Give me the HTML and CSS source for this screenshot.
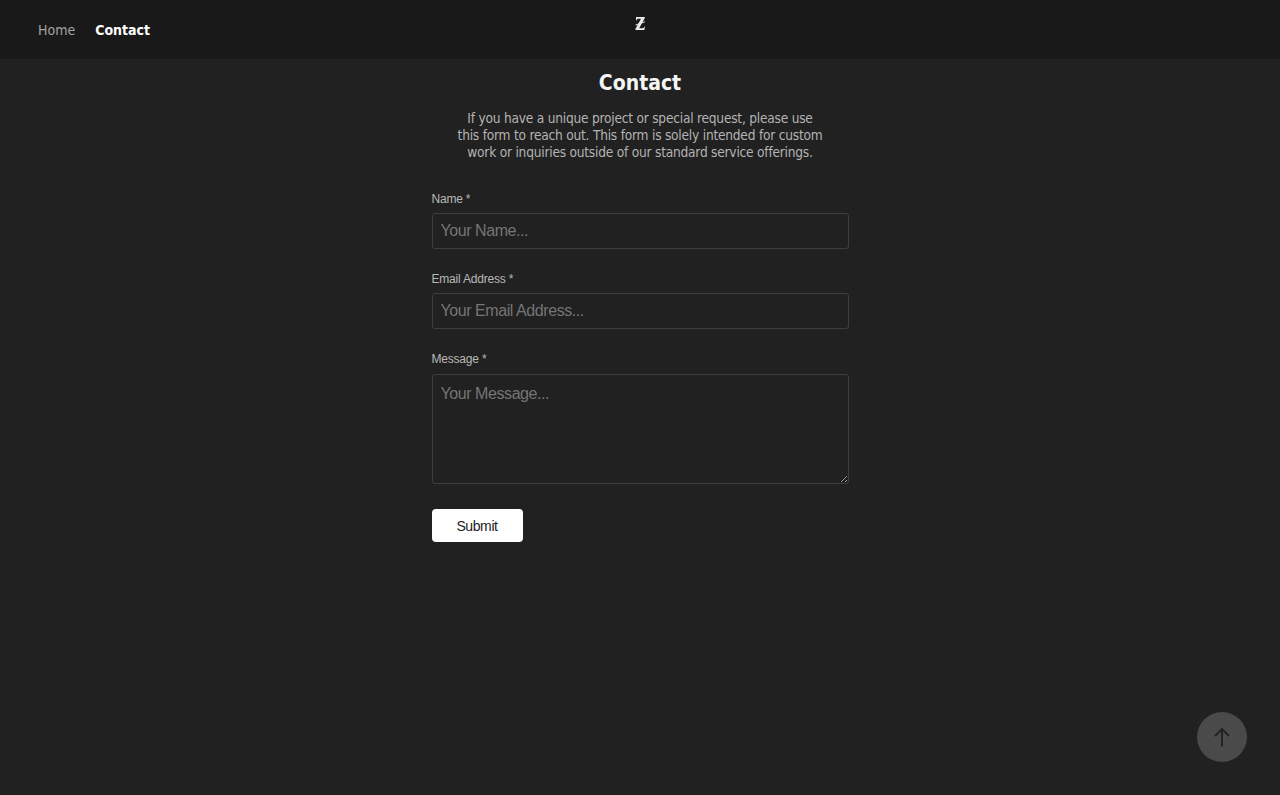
FILE: index.html
```html
<!DOCTYPE html>
<html lang="en">
<head>
<meta charset="utf-8">
<title>Contact</title>
<link rel="stylesheet" href="styles.css">
</head>
<body>
<header class="topbar">
  <nav class="nav">
    <a class="nav-link" href="#">Home</a>
    <a class="nav-link active" href="#">Contact</a>
  </nav>
  <a class="logo" href="#" aria-label="Logo">
    <svg width="12" height="16" viewBox="0 0 12 16"><path d="M2 2 L10.8 2 L10.8 3 L5.2 13.2 L9.2 13.2 L10.6 11.4 L10.9 11.4 L10.4 15 L1.4 15 L1.4 14 L7 3.8 L3.4 3.8 L2.4 5.4 L2 5.4 Z" fill="#ececec"/><path d="M1.6 9.6 L10.8 6.2 L10.8 7.2 L1.6 10.6 Z" fill="#ececec"/></svg>
  </a>
</header>
<main class="page">
  <h1 class="title">Contact</h1>
  <p class="intro">If you have a unique project or special request, please use this form to reach out. This form is solely intended for custom work or inquiries outside of our standard service offerings.</p>
  <form class="form">
    <div class="field">
      <label class="label" for="name">Name *</label>
      <input class="input" id="name" type="text" placeholder="Your Name...">
    </div>
    <div class="field">
      <label class="label" for="email">Email Address *</label>
      <input class="input" id="email" type="email" placeholder="Your Email Address...">
    </div>
    <div class="field">
      <label class="label" for="message">Message *</label>
      <textarea class="input area" id="message" placeholder="Your Message..."></textarea>
    </div>
    <button class="submit" type="button">Submit</button>
  </form>
</main>
<button class="to-top" type="button" aria-label="Back to top">
  <svg width="24" height="24" viewBox="0 0 24 24" fill="none" stroke="#222" stroke-width="1.9"><path d="M12 21.5 V4 M5 11 L12 4 L19 11"/></svg>
</button>
</body>
</html>
```
FILE: styles.css
```css
* { box-sizing: border-box; }
html, body { margin: 0; height: 100%; }
body {
  background: #212121;
  color: #bdbdbd;
  font-family: "DejaVu Sans", sans-serif;
  overflow: hidden;
}
.topbar {
  position: relative;
  height: 59px;
  background: #191919;
  padding: 0 38px;
  display: flex;
  align-items: flex-start;
}
.nav { display: flex; gap: 20px; padding-top: 20px; }
.nav-link {
  color: #a3a3a3;
  text-decoration: none;
  font-size: 14px;
  line-height: 20px;
  font-stretch: condensed;
}
.nav-link.active { color: #fff; font-weight: 700; }
.logo {
  position: absolute;
  left: 634px;
  top: 15px;
  display: block;
  width: 12px;
  height: 16px;
}
.logo svg { display: block; }
.page {
  width: 417px;
  margin: 0 auto;
  display: flex;
  flex-direction: column;
  align-items: center;
}
.title {
  margin: 10px 0 0;
  color: #f5f5f5;
  font-size: 21px;
  line-height: 28px;
  font-weight: 700;
  font-stretch: condensed;
}
.intro {
  width: 367px;
  margin: 13px 0 0;
  text-align: center;
  font-size: 13.6px;
  letter-spacing: -0.22px;
  line-height: 17px;
  font-stretch: condensed;
  color: #b4b4b4;
}
.form { width: 100%; margin-top: 31px; display: flex; flex-direction: column; align-items: flex-start; }
.field { width: 100%; margin-bottom: 23px; display: flex; flex-direction: column; }
.field:last-of-type { margin-bottom: 25px; }
.label {
  font-family: "Liberation Sans", Arial, sans-serif;
  font-size: 12px;
  letter-spacing: -0.2px;
  line-height: 14px;
  margin-bottom: 7px;
  color: #b8b8b8;
}
.input {
  display: block;
  width: 100%;
  height: 36px;
  padding: 0 8px 1px;
  background: transparent;
  border: 1px solid #3e3e3e;
  border-radius: 3px;
  color: #ddd;
  font-family: "Liberation Sans", Arial, sans-serif;
  font-size: 16px;
  letter-spacing: -0.43px;
  outline: none;
}
.input::placeholder { color: #757575; opacity: 1; }
.area { height: 110px; margin-top: 1px; padding: 10px 8px; line-height: 18px; }
.submit {
  width: 91px;
  height: 33px;
  background: #fff;
  border: 0;
  border-radius: 4px;
  color: #222;
  font-family: "Liberation Sans", Arial, sans-serif;
  font-size: 14px;
  letter-spacing: -0.4px;
  padding: 0;
}
.to-top {
  position: fixed;
  left: 1197px;
  top: 712px;
  width: 50px;
  height: 50px;
  border: 0;
  border-radius: 50%;
  background: #4a4a4a;
  padding: 0;
  display: flex;
  align-items: center;
  justify-content: center;
}
```
